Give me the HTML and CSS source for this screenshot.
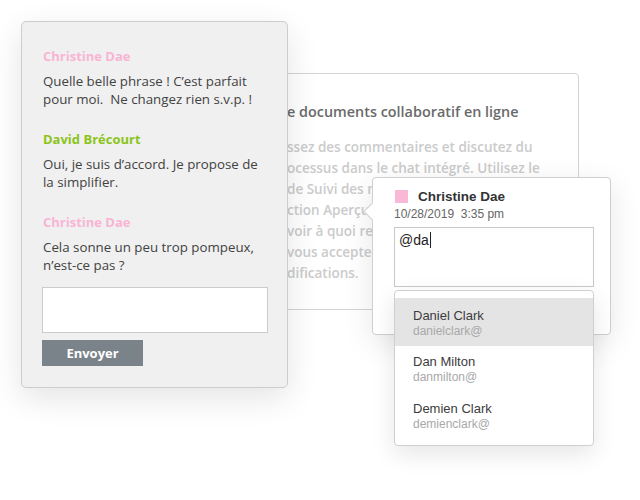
FILE: index.html
```html
<!DOCTYPE html>
<html lang="fr">
<head>
<meta charset="utf-8">
<title>Chat</title>
<link rel="stylesheet" href="styles.css">
</head>
<body>
<div class="canvas">
  <div class="doc">
    <div class="doc-title">e documents collaboratif en ligne</div>
    <div class="doc-body">
      <div class="ln">ssez des commentaires et discutez du</div>
      <div class="ln">ocessus dans le chat intégré. Utilisez le</div>
      <div class="ln">de Suivi des modifications et la</div>
      <div class="ln">ction Aperçu pour voir</div>
      <div class="ln">voir à quoi ressemblera le</div>
      <div class="ln">vous acceptez toutes les</div>
      <div class="ln">difications.</div>
    </div>
  </div>

  <div class="chat">
    <div class="msg">
      <div class="author pink">Christine Dae</div>
      <div class="text">Quelle belle phrase ! C’est parfait pour moi.&nbsp; Ne changez rien s.v.p. !</div>
    </div>
    <div class="msg">
      <div class="author green">David Brécourt</div>
      <div class="text">Oui, je suis d’accord. Je propose de la simplifier.</div>
    </div>
    <div class="msg">
      <div class="author pink">Christine Dae</div>
      <div class="text">Cela sonne un peu trop pompeux, n’est-ce pas ?</div>
    </div>
    <div class="chat-input"></div>
    <button class="send">Envoyer</button>
  </div>

  <div class="comment">
    <div class="arrow"></div>
    <div class="c-head">
      <span class="swatch"></span>
      <span class="c-name">Christine Dae</span>
    </div>
    <div class="c-date">10/28/2019  3:35 pm</div>
    <div class="c-input">@da<span class="caret"></span></div>
  </div>

  <div class="mentions">
    <div class="m-item active">
      <div class="m-name">Daniel Clark</div>
      <div class="m-handle">danielclark@</div>
    </div>
    <div class="m-item">
      <div class="m-name">Dan Milton</div>
      <div class="m-handle">danmilton@</div>
    </div>
    <div class="m-item">
      <div class="m-name">Demien Clark</div>
      <div class="m-handle">demienclark@</div>
    </div>
  </div>
</div>
</body>
</html>
```

FILE: styles.css
```css
* { box-sizing: border-box; }
html, body { margin: 0; padding: 0; background: #fff; }
body { width: 640px; height: 500px; overflow: hidden; }

.canvas {
  position: relative;
  width: 640px;
  height: 500px;
}

/* background document card */
.doc {
  position: absolute;
  left: 200px;
  top: 73px;
  width: 379px;
  height: 237px;
  background: #fff;
  border: 1px solid #d4d4d4;
  border-radius: 4px;
  padding: 28px 0 0 86px;
  font-family: "Open Sans", sans-serif;
  font-weight: 600;
  white-space: nowrap;
  overflow: hidden;
}
.doc-title {
  font-size: 14.4px;
  line-height: 20px;
  color: #6a6a6a;
  margin-bottom: 15px;
}
.doc-body {
  font-size: 13.5px;
  line-height: 21px;
  color: #cbcbcb;
}

/* chat panel */
.chat {
  position: absolute;
  left: 21px;
  top: 21px;
  width: 267px;
  height: 367px;
  background: #f0f0f0;
  border: 1px solid #cdcdcd;
  border-radius: 5px;
  box-shadow: 0 10px 32px rgba(0,0,0,0.11);
  padding: 25px 20px 0 21px;
  font-family: "Open Sans", sans-serif;
  display: flex;
  flex-direction: column;
  z-index: 2;
}
.msg { margin-bottom: 22px; }
.msg:nth-child(3) { margin-bottom: 13px; }
.author {
  font-size: 13px;
  font-weight: 700;
  line-height: 18px;
  margin-bottom: 7px;
}
.pink { color: #f9b4d4; }
.green { color: #8bc41b; }
.text {
  font-size: 13.3px;
  line-height: 18px;
  color: #424242;
  max-width: 222px;
}
.chat-input {
  margin-left: -1px;
  width: 226px;
  height: 46px;
  background: #fff;
  border: 1px solid #cbcbcb;
}
.send {
  margin-top: 7px;
  margin-left: -1px;
  width: 101px;
  height: 26px;
  border: 0;
  background: #7b838a;
  color: #fff;
  font-family: "Open Sans", sans-serif;
  font-weight: 700;
  font-size: 13px;
  padding: 0;
  cursor: pointer;
}

/* comment popup */
.comment {
  position: absolute;
  left: 372px;
  top: 177px;
  width: 239px;
  height: 158px;
  background: #fff;
  border: 1px solid #cfcfcf;
  border-radius: 4px;
  box-shadow: 0 8px 30px rgba(0,0,0,0.10);
  padding: 9px 16px 0 21px;
  font-family: "Liberation Sans", Arial, sans-serif;
  z-index: 3;
}
.arrow {
  position: absolute;
  left: -7px;
  top: 27px;
  width: 13px;
  height: 13px;
  background: #fff;
  border-left: 1px solid #cfcfcf;
  border-bottom: 1px solid #cfcfcf;
  transform: rotate(45deg);
}
.c-head {
  display: flex;
  align-items: center;
  gap: 10px;
  height: 18px;
  padding-left: 1px;
}
.swatch {
  width: 13px;
  height: 13px;
  background: #f9b8d6;
}
.c-name {
  font-size: 13.5px;
  font-weight: 700;
  color: #333;
}
.c-date {
  margin-top: 2px;
  font-size: 12px;
  line-height: 15px;
  color: #666;
  white-space: pre;
}
.c-input {
  margin-top: 5px;
  width: 200px;
  height: 60px;
  border: 1px solid #c9c9c9;
  padding: 4px 4px 0 4px;
  font-size: 14px;
  line-height: 16px;
  color: #222;
}
.caret {
  display: inline-block;
  width: 1px;
  height: 16px;
  background: #222;
  vertical-align: -3px;
  margin-left: 1px;
}

/* mentions dropdown */
.mentions {
  position: absolute;
  left: 394px;
  top: 290px;
  width: 200px;
  height: 156px;
  background: #fff;
  border: 1px solid #cfcfcf;
  border-radius: 4px;
  box-shadow: 0 8px 24px rgba(0,0,0,0.10);
  padding-top: 7px;
  font-family: "Liberation Sans", Arial, sans-serif;
  z-index: 4;
}
.m-item {
  height: 47px;
  padding: 8px 0 0 18px;
}
.m-item.active {
  background: #e4e4e5;
  height: 48px;
  padding-top: 10px;
}
.m-name {
  font-size: 13px;
  line-height: 16px;
  color: #3c3c3c;
}
.m-handle {
  font-size: 12px;
  line-height: 15px;
  color: #a8a8a8;
}
```
